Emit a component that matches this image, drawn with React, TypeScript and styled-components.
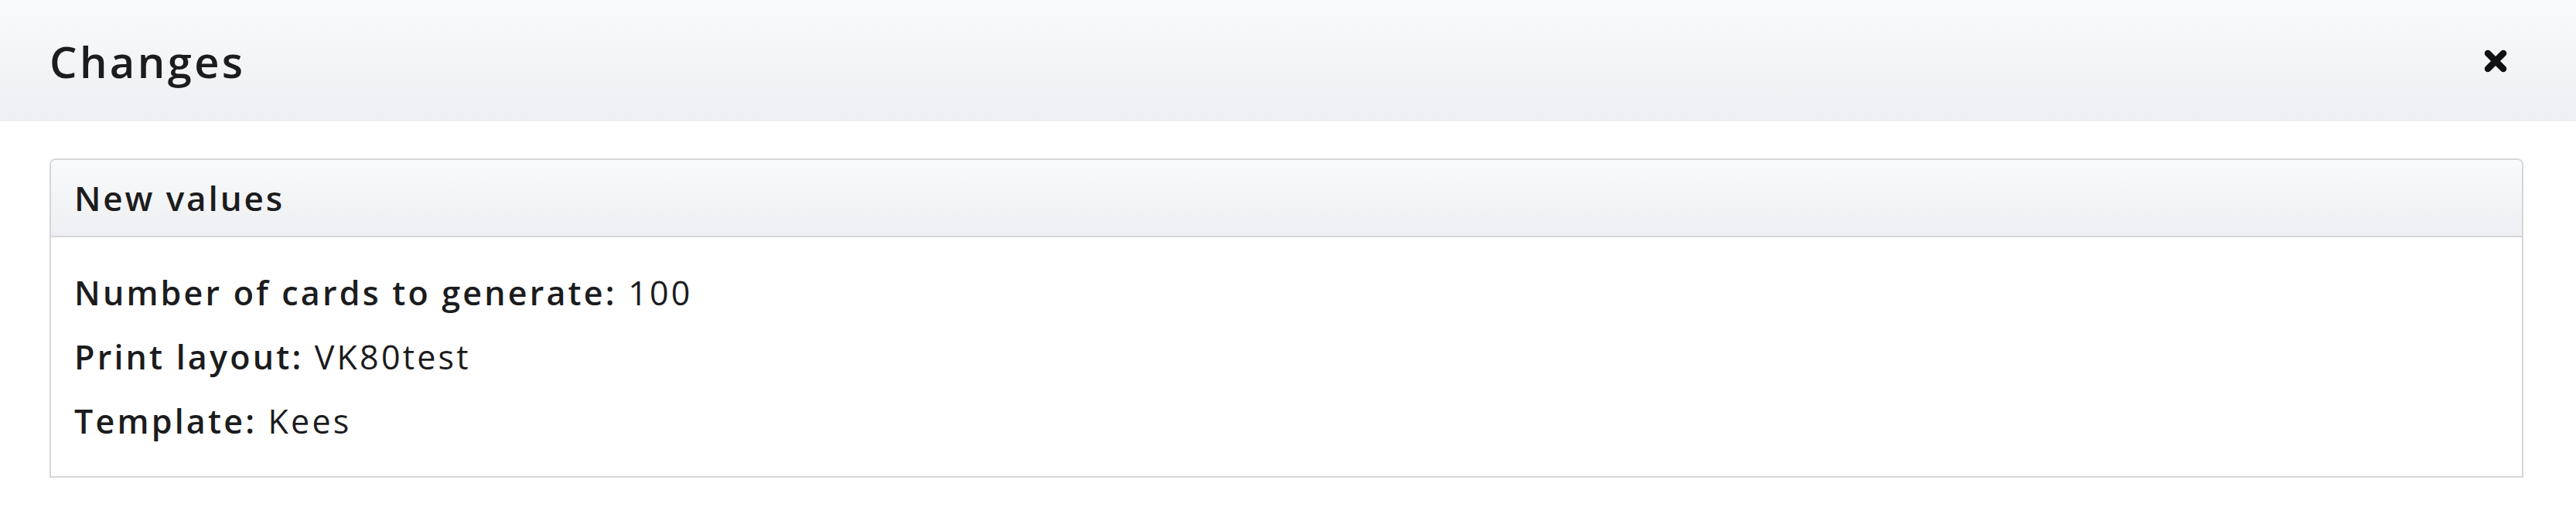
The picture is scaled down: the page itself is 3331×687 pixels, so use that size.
import React from "react";
import styled, { createGlobalStyle } from "styled-components";

const GlobalStyle = createGlobalStyle`
  html, body {
    margin: 0;
    padding: 0;
    background: #ffffff;
  }
  body {
    font-family: "Open Sans", "Noto Sans", sans-serif;
    color: #1c1c1e;
  }
`;

const Modal = styled.div`
  width: 3331px;
  display: flex;
  flex-direction: column;
`;

const Header = styled.header`
  height: 157px;
  box-sizing: border-box;
  padding: 0 89px 0 64px;
  display: flex;
  align-items: center;
  justify-content: space-between;
  background: linear-gradient(to bottom, #f9fafb 0%, #eeeff2 100%);
`;

const Title = styled.h1`
  margin: 0;
  font-family: "Open Sans", sans-serif;
  font-size: 56px;
  font-weight: 600;
  letter-spacing: 3.4px;
  color: #1c1c1e;
  line-height: 1;
`;

const CloseButton = styled.button`
  width: 30px;
  height: 30px;
  padding: 0;
  border: none;
  background: transparent;
  display: flex;
  align-items: center;
  justify-content: center;
  cursor: pointer;
`;

const Body = styled.div`
  padding: 48px 68px 0 64px;
`;

const Panel = styled.section`
  border: 2px solid #d6d6d8;
  border-radius: 8px 8px 0 0;
  background: #ffffff;
`;

const PanelHeading = styled.div`
  height: 100px;
  box-sizing: border-box;
  padding: 0 30px;
  display: flex;
  align-items: center;
  border-bottom: 2px solid #d6d6d8;
  border-radius: 6px 6px 0 0;
  background: linear-gradient(to bottom, #f9fafb 0%, #eeeff2 100%);
`;

const PanelTitle = styled.h2`
  margin: 0;
  font-family: "Open Sans", sans-serif;
  font-size: 44px;
  font-weight: 600;
  letter-spacing: 2.9px;
  color: #1c1c1e;
`;

const PanelBody = styled.div`
  padding: 30px 30px;
`;

const Row = styled.div`
  font-family: "Open Sans", sans-serif;
  font-size: 43px;
  line-height: 83px;
  letter-spacing: 3.2px;
  color: #1c1c1e;
  white-space: nowrap;
`;

const Label = styled.span`
  font-weight: 600;
`;

const Value = styled.span`
  font-weight: 400;
`;

const CloseIcon = () => (
  <svg width="30" height="30" viewBox="0 0 30 30" aria-hidden="true">
    <path
      d="M5 5 L25 25 M25 5 L5 25"
      stroke="#111111"
      strokeWidth="8.5"
      strokeLinecap="round"
    />
  </svg>
);

const rows = [
  { label: "Number of cards to generate", value: "100" },
  { label: "Print layout", value: "VK80test" },
  { label: "Template", value: "Kees" },
];

export default function App() {
  return (
    <>
      <GlobalStyle />
      <Modal>
        <Header>
          <Title>Changes</Title>
          <CloseButton aria-label="Close">
            <CloseIcon />
          </CloseButton>
        </Header>
        <Body>
          <Panel>
            <PanelHeading>
              <PanelTitle>New values</PanelTitle>
            </PanelHeading>
            <PanelBody>
              {rows.map((r) => (
                <Row key={r.label}>
                  <Label>{r.label}:</Label> <Value>{r.value}</Value>
                </Row>
              ))}
            </PanelBody>
          </Panel>
        </Body>
      </Modal>
    </>
  );
}
